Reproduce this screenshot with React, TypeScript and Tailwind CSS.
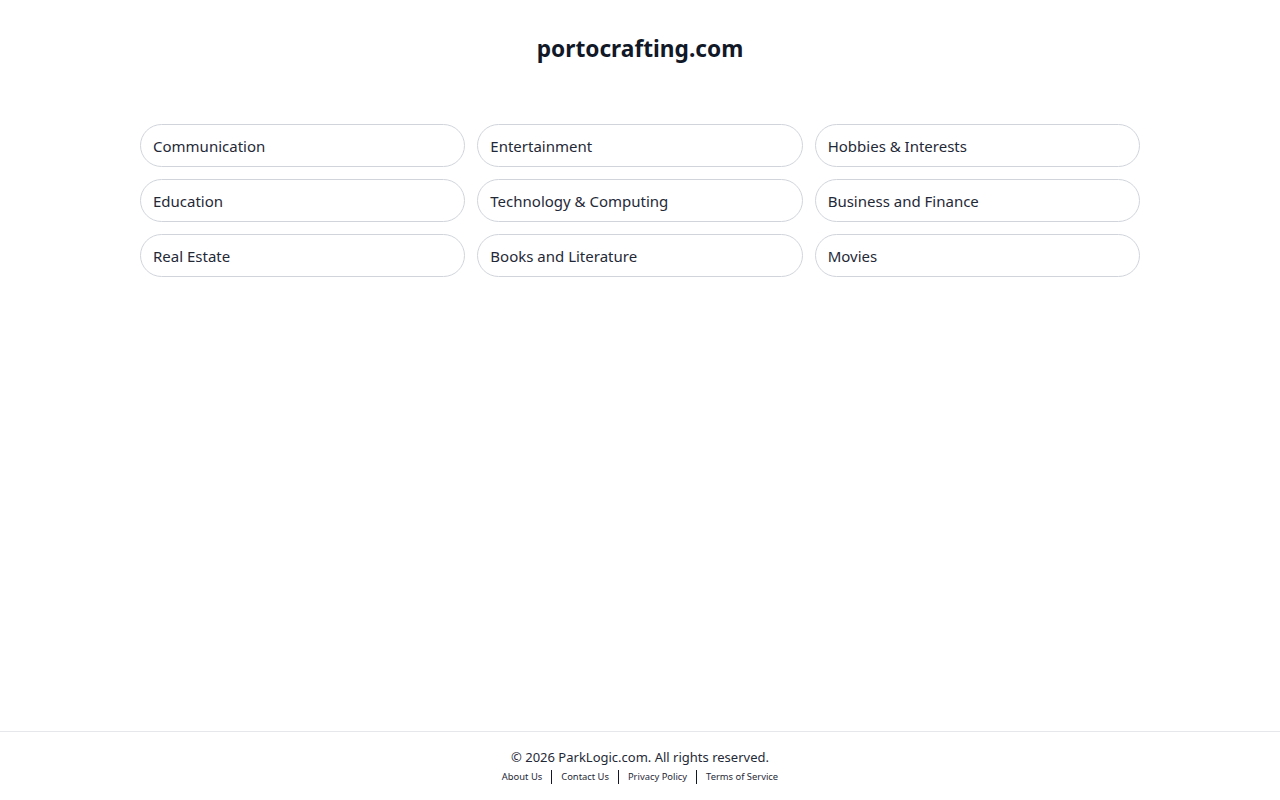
const categories = [
  'Communication',
  'Entertainment',
  'Hobbies & Interests',
  'Education',
  'Technology & Computing',
  'Business and Finance',
  'Real Estate',
  'Books and Literature',
  'Movies',
];

const links = ['About Us', 'Contact Us', 'Privacy Policy', 'Terms of Service'];

export default function App() {
  return (
    <div className="min-h-screen flex flex-col bg-white text-[#111827] font-['Noto_Sans',sans-serif]">
      <main className="flex-1">
        <h1 className="pt-[32px] text-center text-[22.7px] font-bold leading-[34px]">portocrafting.com</h1>

        <div className="mx-auto mt-[58px] w-[1000px] grid grid-cols-3 gap-x-[12px] gap-y-[12px]">
          {categories.map((c) => (
            <a
              key={c}
              href="#"
              className="h-[43px] flex items-center px-[12px] pt-[2px] rounded-full border border-[#d1d5db] text-[15px] text-[#1f2937] hover:bg-gray-50"
            >
              {c}
            </a>
          ))}
        </div>
      </main>

      {/* Footer */}
      <footer className="border-t border-[#e5e7eb] pt-[16px] pb-[16px] text-center">
        <p className="text-[13px] leading-[18px] text-[#1f2937]">© 2026 ParkLogic.com. All rights reserved.</p>
        <div className="mt-[4px] flex justify-center items-center text-[9.4px] leading-[14px] text-[#1f2937]">
          {links.map((l, i) => (
            <div key={l} className="flex items-center">
              {i > 0 && <span className="mx-[9px] h-[14px] w-px bg-[#111827]"></span>}
              <a href="#">{l}</a>
            </div>
          ))}
        </div>
      </footer>
    </div>
  );
}
